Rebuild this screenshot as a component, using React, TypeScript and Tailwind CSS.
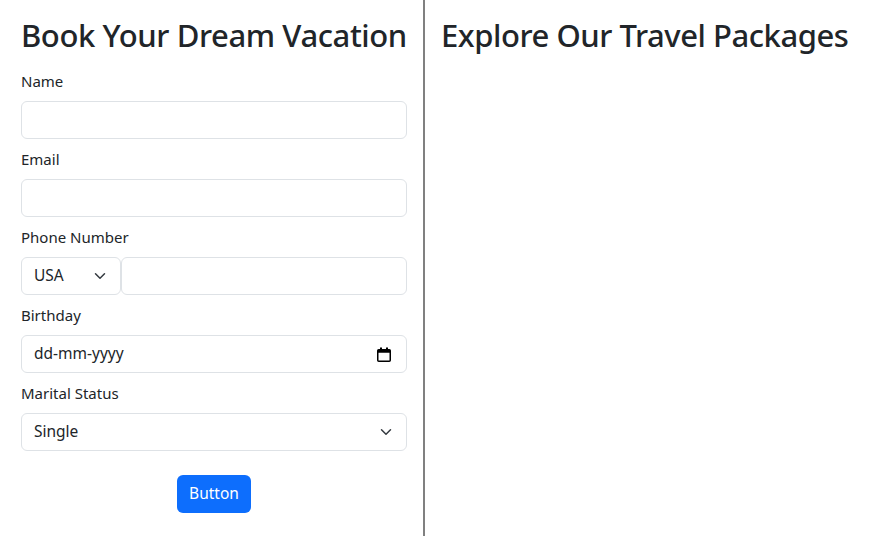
import React from "react";

const Chevron = () => (
  <svg width="16" height="12" viewBox="0 0 16 16" className="shrink-0">
    <path d="M2 5l6 6 6-6" fill="none" stroke="#343a40" strokeWidth="2" strokeLinecap="round" strokeLinejoin="round" />
  </svg>
);

const Calendar = () => (
  <svg width="14" height="15" viewBox="0 0 14 15" className="shrink-0">
    <rect x="0.75" y="2.75" width="12.5" height="11.5" rx="1" fill="none" stroke="#000" strokeWidth="1.5" />
    <rect x="0.75" y="2.75" width="12.5" height="3" fill="#000" />
    <rect x="3" y="0.5" width="2" height="3" fill="#000" />
    <rect x="9" y="0.5" width="2" height="3" fill="#000" />
  </svg>
);

const Label = ({ children }: { children: React.ReactNode }) => (
  <div className="text-[15px] leading-[24px] mt-2 mb-2 text-[#212529]">{children}</div>
);

const Field = ({ children, className = "" }: { children?: React.ReactNode; className?: string }) => (
  <div
    className={`h-[38px] border border-[#dee2e6] rounded-[6px] bg-white flex items-center pl-3 text-[15.5px] text-[#212529] ${className}`}
  >
    {children}
  </div>
);

export default function App() {
  return (
    <div
      className="w-[894px] h-[536px] bg-white flex text-[#212529] overflow-hidden"
      style={{ fontFamily: '"Noto Sans", "Open Sans", sans-serif' }}
    >
      <div className="w-[423px] shrink-0 pl-[21px] pr-[16px] pt-[14px]">
        <h1 className="text-[31px] leading-[42px] font-medium tracking-[-0.4px] whitespace-nowrap mb-[13px]">
          Book Your Dream Vacation
        </h1>
        <Label>Name</Label>
        <Field className="pr-3" />
        <Label>Email</Label>
        <Field className="pr-3" />
        <Label>Phone Number</Label>
        <div className="flex">
          <Field className="w-[100px] justify-between pr-3">
            <span>USA</span>
            <Chevron />
          </Field>
          <Field className="flex-1 pr-3" />
        </div>
        <Label>Birthday</Label>
        <Field className="justify-between pr-[15px]">
          <span>dd-mm-yyyy</span>
          <Calendar />
        </Field>
        <Label>Marital Status</Label>
        <Field className="justify-between pr-3">
          <span>Single</span>
          <Chevron />
        </Field>
        <div className="flex justify-center mt-6">
          <button className="h-[38px] w-[74px] rounded-[6px] bg-[#0d6efd] text-white text-[15.5px]">Button</button>
        </div>
      </div>
      <div className="flex-1 border-l-2 border-[#808080] pl-[16px] pt-[14px]">
        <h1 className="text-[31px] leading-[42px] font-medium tracking-[-0.45px] whitespace-nowrap">
          Explore Our Travel Packages
        </h1>
      </div>
    </div>
  );
}
